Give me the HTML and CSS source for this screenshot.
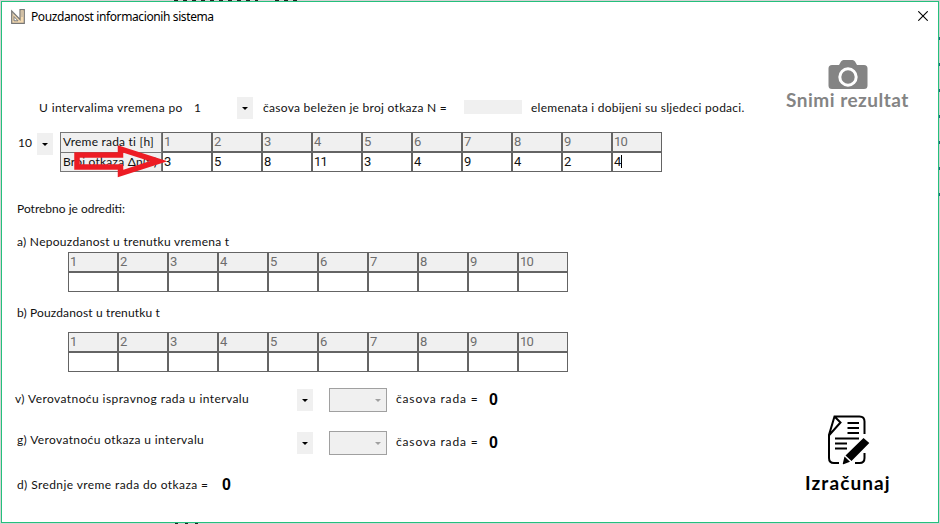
FILE: index.html
```
<!DOCTYPE html>
<html lang="sr">
<head>
<meta charset="utf-8">
<title>Pouzdanost informacionih sistema</title>
<link rel="stylesheet" href="styles.css">
</head>
<body>
<main class="window">
  <header class="titlebar">
    <svg class="app-icon" viewBox="0 0 14 15"><path d="M.7 2v12.3h12.6V.7H9v9.8L.7 2Z" fill="#f3d9b0" stroke="#777" stroke-width="1.2"/><path d="M3 7.5v4.3h4Z" fill="#fff" stroke="#777"/><path d="M1 4h2M1 6h1.5M10 3h2M10 5h2M10 7h2" stroke="#999" stroke-width=".8"/></svg>
    <h1 class="title">Pouzdanost informacionih sistema</h1>
    <svg class="close" viewBox="0 0 10 10"><path d="M.3.3l9.4 9.4M9.700.3L.3 9.700" stroke="#000" stroke-width="1.1"/></svg>
  </header>
  <div class="body">
    <section class="form">
      <div class="row intro">
        <span class="t1">U intervalima vremena po</span><span class="one">1</span>
        <span class="drop"></span>
        <span class="t2">časova beležen je broj otkaza N =</span>
        <span class="count"></span>
        <span class="t3">elemenata i dobijeni su sljedeci podaci.</span>
      </div>
      <div class="data">
        <span class="ten">10</span><span class="drop"></span>
        <div class="labels"><div class="l1">Vreme rada ti [h]</div><div class="l2">Broj otkaza Δn(ti)</div>
          <svg class="arrow" viewBox="0 0 92 34"><path d="M3 11H46.500V5L84.500 17.200 46.500 29.500V23H3Z" fill="none" stroke="#ed1c24" stroke-width="5.500"/></svg>
        </div>
        <div class="grid">
          <b>1</b><b>2</b><b>3</b><b>4</b><b>5</b><b>6</b><b>7</b><b>8</b><b>9</b><b>10</b>
          <i>3</i><i>5</i><i>8</i><i>11</i><i>3</i><i>4</i><i>9</i><i>4</i><i>2</i><i class="caret">4</i>
        </div>
      </div>
      <p class="need">Potrebno je odrediti:</p>
      <p class="pa">a) Nepouzdanost u trenutku vremena t</p>
      <div class="grid result">
        <b>1</b><b>2</b><b>3</b><b>4</b><b>5</b><b>6</b><b>7</b><b>8</b><b>9</b><b>10</b>
        <i></i><i></i><i></i><i></i><i></i><i></i><i></i><i></i><i></i><i></i>
      </div>
      <p class="pb">b) Pouzdanost u trenutku t</p>
      <div class="grid result">
        <b>1</b><b>2</b><b>3</b><b>4</b><b>5</b><b>6</b><b>7</b><b>8</b><b>9</b><b>10</b>
        <i></i><i></i><i></i><i></i><i></i><i></i><i></i><i></i><i></i><i></i>
      </div>
      <div class="row interval v"><span class="q qv">v) Verovatnoću ispravnog rada u intervalu</span><span class="drop"></span><span class="combo"></span><span class="hours">časova rada =</span><strong>0</strong></div>
      <div class="row interval g"><span class="q qg">g) Verovatnoću otkaza u intervalu</span><span class="drop"></span><span class="combo"></span><span class="hours">časova rada =</span><strong>0</strong></div>
      <div class="row mean"><span class="qd">d) Srednje vreme rada do otkaza =</span><strong>0</strong></div>
    </section>
    <aside class="actions">
      <div class="action save">
        <svg width="40" height="30" viewBox="0 0 40 30"><path d="M4 5h7l2-3.500Q14 0 15.500 0h9Q26 0 27 1.500L29 5h7q3.500 0 3.500 3.500v17Q39.500 29 36 29H4Q.5 29 .5 25.500v-17Q.5 5 4 5Z" fill="#848484"/><circle cx="20" cy="17" r="8.200" fill="#848484" stroke="#fff" stroke-width="3"/></svg>
        <span class="save-text">Snimi rezultat</span>
      </div>
      <div class="action calc">
        <svg width="44" height="50" viewBox="0 0 44 50"><g fill="none" stroke="#000" stroke-width="2"><path d="M12 48H7Q2 48 2 43V20L7.500 1.500H32.500Q37.500 1.500 37.500 6.500V19M37.500 38v5Q37.500 48 32.500 48H28M2.300 20L13.500 7.500 8 2"/><path d="M20.500 8h11.500M20.500 13h11.500M20.500 18h11.500M8 23.500h24M8 28.500h12M8 33.500h12"/></g><path d="M36.500 23l5.800 5L24.500 46l-6-5.500ZM17.500 41.500l5.500 5.200-6.500 2.500q-.8.100-.7-.7Z"/></svg>
        <span class="calc-text">Izračunaj</span>
      </div>
    </aside>
  </div>
</main>
</body>
</html>
```
FILE: styles.css
```
* { box-sizing: border-box; }
body {
  margin: 0; padding: 1px; width: 940px; height: 524px; overflow: hidden;
  font: 12px/16px Lato, sans-serif; color: #111;
  background:
    repeating-linear-gradient(90deg, #222 0 4px, #d5d2d4 4px 9px) 174px 0 / 84px 1px no-repeat,
    repeating-linear-gradient(90deg, #222 0 4px, #d5d2d4 4px 9px) 275px 0 / 24px 1px no-repeat,
    repeating-linear-gradient(90deg, #222 0 3px, #d5d2d4 3px 10px) 175px 523px / 24px 1px no-repeat,
    repeating-linear-gradient(#27647c 0 3px, #d5d2d4 3px 26px) 939px 37px / 1px 170px no-repeat,
    #d5d2d4;
}
.window { width: 938px; height: 522px; border: 1px solid #24c07c; background: #fff; display: flex; flex-direction: column; }
.titlebar { height: 30px; display: flex; align-items: center; padding: 0 10px 0 9px; flex: none; }
.app-icon { width: 14px; height: 15px; margin-bottom: 1px; }
.title { margin: 0 0 1px 6px; font: 400 12px/16px "Noto Sans", sans-serif; letter-spacing: -.39px; color: #000; flex: 1; }
.close { width: 10px; height: 10px; margin-bottom: 2px; }
.body { display: flex; flex: 1; }
.form { width: 770px; }
.form span { white-space: nowrap; }
.row { display: flex; align-items: center; }
.intro { height: 22px; margin-top: 65px; padding-left: 37px; }
.intro > span:not(.drop, .count) { margin-bottom: 1px; }
.t1 { width: 155px; letter-spacing: .37px; }
.one { width: 43px; }
.drop { width: 16px; height: 22px; background: #f0f0f0; display: flex; align-items: center; justify-content: center; flex: none; }
.drop::after, .combo::after { content: ""; border: solid transparent; border-width: 3px 3px 0; border-top-color: #000; }
.t2 { width: 201px; margin-left: 10px; letter-spacing: .28px; }
.count { width: 58px; height: 14px; background: #f0f0f0; margin-bottom: 2px; }
.t3 { margin-left: 9px; letter-spacing: .26px; }
.data { display: flex; margin-top: 13px; padding-left: 16px; height: 40px; }
.ten { width: 19px; padding-top: 3px; }
.data .drop { margin: 1px 7px 0 0; }
.labels { width: 102px; position: relative; display: grid; grid-template-rows: 20px 20px; border: 1px solid #777; background: #f0f0f0; letter-spacing: .22px; }
.labels div { padding-left: 2px; line-height: 18px; white-space: nowrap; overflow: hidden; }
.l1 { border-bottom: 1px solid #777; }
.arrow { position: absolute; width: 92px; height: 34px; left: 13px; top: 11px; z-index: 1; }
.grid { width: 500px; display: grid; grid-template-columns: repeat(10, 50px); grid-template-rows: 20px 20px; font: 13px/17px Roboto, sans-serif; letter-spacing: -.8px; }
.grid b, .grid i { font-weight: 400; font-style: normal; border: 1px solid #646464; padding-left: 1px; }
.grid b { background: #f0f0f0; color: #6d6d6d; }
.caret::after { content: ""; display: inline-block; height: 13px; width: 1px; background: #000; vertical-align: -2px; }
p { margin: 0; padding-left: 15px; height: 16px; }
.need { margin-top: 29px; }
.pa { margin-top: 17px; letter-spacing: .28px; }
.result { margin: 2px 0 0 66px; }
.pb { margin: 13px 0 11px; letter-spacing: .13px; }
.interval { height: 24px; padding-left: 13px; }
.v { margin-top: 16px; }
.g { margin-top: 19px; padding-left: 15px; }
.q { width: 282px; letter-spacing: .42px; margin-top: -2px; }
.qg { width: 280px; margin-top: -7px; letter-spacing: .37px; }
.combo { width: 58px; height: 24px; margin-left: 16px; border: 1px solid #a0a0a0; background: #f0f0f0; display: flex; align-items: center; justify-content: flex-end; padding-right: 5px; }
.combo::after { border-top-color: #a0a0a0; }
.hours { width: 102px; padding-left: 9px; letter-spacing: .84px; margin-top: -2px; }
strong { font: 700 16px/20px "Liberation Sans", sans-serif; color: #000; margin-top: -1px; }
.mean { height: 20px; margin-top: 20px; padding-left: 15px; }
.qd { width: 205px; letter-spacing: .4px; }
.actions { flex: 1; }
.action { display: flex; flex-direction: column; font-weight: 700; font-size: 19px; line-height: 22px; white-space: nowrap; }
.save { margin-top: 28px; padding-left: 14px; color: #848484; letter-spacing: .5px; }
.save svg { margin-left: 42px; }
.save-text { margin-top: -1px; }
.calc { margin-top: 304px; padding-left: 33px; color: #000; letter-spacing: 1.1px; }
.calc svg { margin-left: 22px; }
.calc-text { margin-top: 7px; }
```
